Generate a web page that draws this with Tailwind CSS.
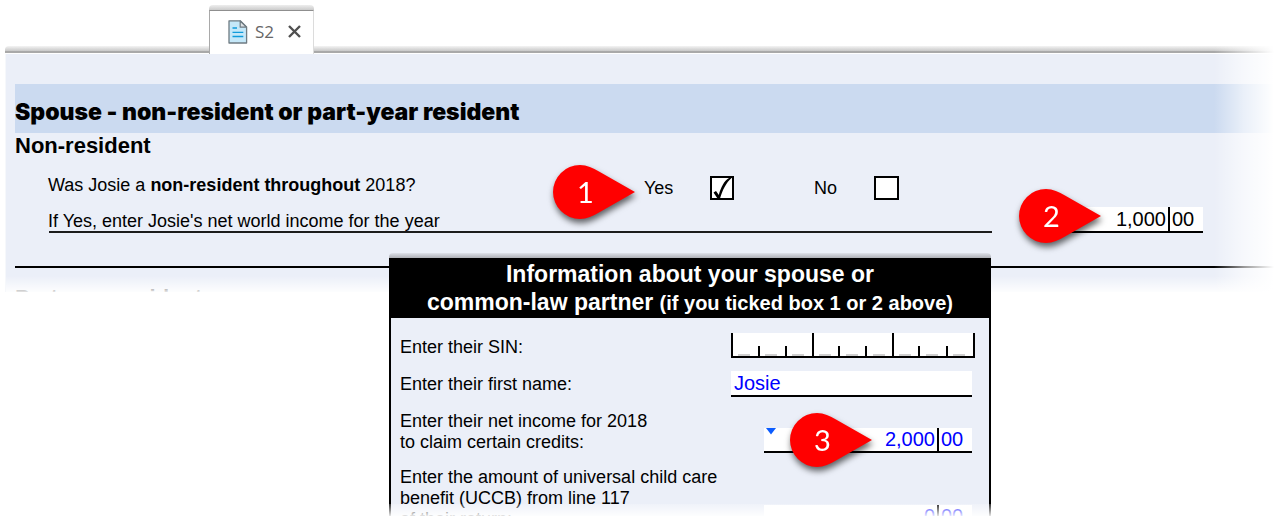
<!DOCTYPE html>
<html lang="en">
<head>
<meta charset="utf-8">
<meta name="viewport" content="width=device-width, initial-scale=1">
<title>S2</title>
<script src="https://cdn.jsdelivr.net/npm/@tailwindcss/browser@4"></script>
</head>
<body class="bg-white font-['Liberation_Sans',Arial,sans-serif] text-lg leading-[21px] text-black">
<div class="relative flex h-screen flex-col overflow-hidden">

  <!-- Tab strip -->
  <header class="relative mr-2 ml-[5px] flex h-[54px] shrink-0 items-end">
    <div class="h-[7px] w-[204px] rounded-tl border-b-2 border-[#a9a9a9] bg-linear-to-b from-[#f4f4f4] to-[#c8c8c8] mb-px"></div>
    <div class="flex w-[105px] flex-col">
      <div class="h-[5px] rounded-t bg-linear-to-b from-[#eeeeee] to-[#cbcbcb]"></div>
      <div class="flex h-11 items-center border-t border-l border-r border-t-[#8f8f8f] border-l-[#a9a9a9] border-r-[#dcdcdc] bg-white pb-0.5 pl-[18px]">
        <svg class="h-6 w-5 shrink-0" viewBox="0 0 20 24" fill="none">
          <path d="M1 .8h11.2L18.6 7v16H1z" fill="#c5e8f9" stroke="#6f7b82" stroke-width="1.3" stroke-linejoin="round"/>
          <path d="M12.2 1v6.2h6.2z" fill="#dfe3e6" stroke="#6f7b82" stroke-width="1.2" stroke-linejoin="round"/>
          <path d="M4.500 8H9M4.500 12.300H15.300M4.500 16.500H15.300" stroke="#0f9bdc" stroke-width="1.3"/>
        </svg>
        <span class="ml-[7px] font-['Open_Sans',sans-serif] text-[17px] text-[#666666]">S2</span>
        <button type="button" aria-label="Close tab" class="ml-[14px]">
          <svg class="h-[13px] w-[13px]" viewBox="0 0 13 13"><path d="M1 1l11 11M12 1L1 12" stroke="#505050" stroke-width="2.4" fill="none"/></svg>
        </button>
      </div>
    </div>
    <div class="mb-px h-[7px] flex-1 border-b-2 border-[#a9a9a9] bg-linear-to-b from-[#f4f4f4] to-[#c8c8c8]"></div>
    <div class="absolute right-0 bottom-0 h-3 w-[60px] bg-linear-to-r from-white/0 to-white"></div>
  </header>

  <!-- Form page -->
  <main class="relative mr-2 ml-[5px] shrink-0 overflow-hidden border-l border-[#f6f8fb] bg-[#ebeff8] pt-[30px] pl-[9px]">
    <h1 class="flex h-[49px] items-end bg-[#cbdaf0] pb-2 font-['Inter',sans-serif] text-[23px] leading-[26px] font-black">Spouse - non-resident or part-year resident</h1>
    <h2 class="text-[22px] leading-[26px] font-bold">Non-resident</h2>

    <div class="flex h-[46px] items-center pt-[12px] pl-[33px]">
      <p class="w-[596px] pb-1.5">Was Josie a <b>non-resident throughout</b> 2018?</p>
      <label for="yes" class="w-[66px]">Yes</label>
      <span class="relative h-6 w-6">
        <input id="yes" type="checkbox" checked class="block h-6 w-6 appearance-none border-2 border-black bg-white">
        <svg class="pointer-events-none absolute inset-0 h-6 w-6" viewBox="0 0 24 24"><path d="M3.500 16.500l2.500-1.500 2.800 4C11 11 14 5 19 2h2.500C16 7 12.500 14 10 22.500H7.500z" fill="#000"/></svg>
      </span>
      <label for="no" class="ml-20 w-[60px]">No</label>
      <input id="no" type="checkbox" class="block h-6 w-[25px] appearance-none border-2 border-black bg-white">
    </div>

    <div class="flex h-7 items-end pr-[71px] pl-[34px]">
      <label for="world" class="flex-1 border-b-2 border-[#1c1c1c] leading-[20px]"><span class="-ml-px">If Yes, enter Josie's net world income for the year</span></label>
      <div class="ml-[69px] flex h-[26px] w-[142px] border-b-2 border-black bg-white text-[20px]">
        <input id="world" value="1,000" class="h-full w-0 flex-1 border-r-2 border-black pr-0.5 text-right">
        <input value="00" aria-label="Net world income, cents" class="h-full w-[33px] pl-0.5">
      </div>
    </div>

    <hr class="mt-[33px] border-t-2 border-black">
    <h2 class="mt-[17px] h-[7px] text-[22px] leading-[26px] font-bold">Part-year resident</h2>

    <div class="pointer-events-none absolute inset-x-0 bottom-0 h-4 bg-linear-to-b from-white/0 to-white/90"></div>
    <div class="pointer-events-none absolute inset-y-0 right-0 w-[60px] bg-linear-to-r from-white/0 via-white/60 to-white"></div>
  </main>

  <!-- Spouse information panel, overlapping the lower edge of the form -->
  <section class="relative -mt-[39px] ml-[389px] flex min-h-0 w-[602px] flex-1 flex-col">
    <div class="h-[5px] shrink-0 rounded-t bg-linear-to-b from-[#dfe2ea] to-[#aeb0b6]"></div>
    <div class="min-h-0 flex-1 overflow-hidden border-x-2 border-black bg-[#ebeff8]">
      <h2 class="h-[60px] bg-black pt-0.5 text-center text-[23px] leading-[28px] font-bold text-white">Information about your spouse or<br>common-law partner <span class="text-[20px]">(if you ticked box 1 or 2 above)</span></h2>
      <div class="flex flex-col gap-[13px] pt-[15px] pr-[14px] pl-[9px]">
        <div class="flex items-end justify-between">
          <label for="sin">Enter their SIN:</label>
          <div class="relative h-[25px] w-[244px]">
            <input id="sin" inputmode="numeric" class="block h-full w-full border-x-2 border-b-2 border-black bg-white">
            <svg class="pointer-events-none absolute inset-0 h-full w-full" viewBox="0 0 244 25" fill="none">
              <path d="M7 22h12M34 22h12M61 22h12M88 22h12M115 22h12M142 22h12M168 22h12M195 22h12M222 22h12" stroke="#d0d0d0" stroke-width="2"/>
              <path d="M82 0v24M162 0v24M28 13v11M55 13v11M108 13v11M135 13v11M188 13v11M216 13v11" stroke="#000" stroke-width="2"/>
            </svg>
          </div>
        </div>
        <div class="flex items-end justify-between">
          <label for="name" class="pb-0.5">Enter their first name:</label>
          <input id="name" value="Josie" class="mr-[3px] h-[26px] w-[241px] border-b-2 border-black bg-white pl-[3px] text-[20px] text-[#0000ff]">
        </div>
        <div class="flex h-[43px] items-end justify-between">
          <label for="net" class="self-start pt-px">Enter their net income for 2018<br>to claim certain credits:</label>
          <div class="mr-[3px] flex h-[25px] w-[208px] border-b-2 border-black bg-white text-[20px] text-[#0000ff]">
            <button type="button" aria-label="Show options" class="self-start pl-0.5"><svg class="h-[7px] w-2.5" viewBox="0 0 10 7"><path d="M0 0h10L5 6.500z" fill="#0b5cff"/></svg></button>
            <input id="net" value="2,000" class="h-full w-0 flex-1 border-r-2 border-black pr-0.5 text-right">
            <input value="00" aria-label="Net income, cents" class="h-full w-[33px] pl-0.5">
          </div>
        </div>
        <div class="flex h-16 items-end justify-between">
          <label for="uccb" class="self-start pt-px">Enter the amount of universal child care<br>benefit (UCCB) from line 117<br>of their return:</label>
          <div class="mr-[3px] flex h-[25px] w-[208px] border-b-2 border-black bg-white text-[20px] text-[#0000ff]">
            <input id="uccb" value="0" class="h-full w-0 flex-1 border-r-2 border-black pr-0.5 text-right">
            <input value="00" aria-label="UCCB, cents" class="h-full w-[33px] pl-0.5">
          </div>
        </div>
      </div>
    </div>
    <div class="pointer-events-none absolute -inset-x-1 bottom-0 h-3 bg-linear-to-b from-white/20 to-white/90"></div>
  </section>

  <!-- Numbered callouts -->
  <svg class="absolute h-0 w-0"><defs><path id="pin" d="M27 0C34 0 40 3 46 6.500L82 27 46 47.500C40 51 34 54 27 54A27 27 0 0 1 27 0z" fill="#ff0000"/></defs></svg>
  <div class="absolute top-[165px] left-[553px] h-[54px] w-[82px] drop-shadow-[1px_4px_3px_rgba(0,0,0,0.6)]">
    <svg class="absolute inset-0 h-full w-full" viewBox="0 0 82 54"><use href="#pin"/></svg>
    <span class="relative block w-[65px] text-center font-['Lato',sans-serif] text-[29px] leading-[53px] text-white">1</span>
  </div>
  <div class="absolute top-[189px] left-[1019px] h-[54px] w-[82px] drop-shadow-[1px_4px_3px_rgba(0,0,0,0.6)]">
    <svg class="absolute inset-0 h-full w-full" viewBox="0 0 82 54"><use href="#pin"/></svg>
    <span class="relative block w-[65px] text-center font-['Lato',sans-serif] text-[29px] leading-[53px] text-white">2</span>
  </div>
  <div class="absolute top-[413px] left-[790px] h-[54px] w-[82px] drop-shadow-[1px_4px_3px_rgba(0,0,0,0.6)]">
    <svg class="absolute inset-0 h-full w-full" viewBox="0 0 82 54"><use href="#pin"/></svg>
    <span class="relative block w-[65px] text-center font-['Lato',sans-serif] text-[29px] leading-[53px] text-white">3</span>
  </div>
</div>
</body>
</html>
